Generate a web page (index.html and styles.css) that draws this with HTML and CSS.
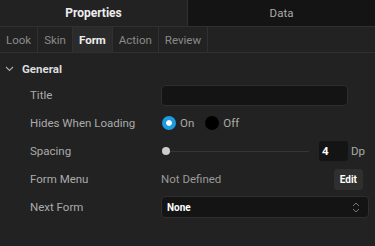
FILE: index.html
```html
<!DOCTYPE html>
<html lang="en">
<head>
  <meta charset="UTF-8">
  <meta name="viewport" content="width=device-width, initial-scale=1.0">
  <title>Properties</title>
  <link rel="stylesheet" href="styles.css">
</head>
<body>
  <div class="panel-tabs">
    <div class="panel-tab active">Properties</div>
    <div class="panel-tab">Data</div>
  </div>
  <div class="sub-tabs">
    <div class="sub-tab">Look</div>
    <div class="sub-tab">Skin</div>
    <div class="sub-tab active">Form</div>
    <div class="sub-tab">Action</div>
    <div class="sub-tab">Review</div>
  </div>
  <div class="section">
    <div class="section-title">
      <svg class="chevron" width="9" height="6" viewBox="0 0 9 6"><path d="M1 1l3.5 3.5L8 1" fill="none" stroke="#aaa" stroke-width="1.1"/></svg>
      General
    </div>
    <div class="row">
      <span class="label">Title</span>
      <div class="field"><input type="text" class="text-input"></div>
    </div>
    <div class="row">
      <span class="label">Hides When Loading</span>
      <div class="field radios">
        <span class="radio on"></span><span class="radio-text">On</span>
        <span class="radio"></span><span class="radio-text">Off</span>
      </div>
    </div>
    <div class="row">
      <span class="label">Spacing</span>
      <div class="field slider-field">
        <div class="slider"><span class="thumb"></span></div>
        <div class="num-input">4</div>
        <span class="unit">Dp</span>
      </div>
    </div>
    <div class="row">
      <span class="label">Form Menu</span>
      <div class="field menu-field">
        <span class="muted">Not Defined</span>
        <button class="edit-btn">Edit</button>
      </div>
    </div>
    <div class="row">
      <span class="label">Next Form</span>
      <div class="field">
        <div class="select">None
          <svg width="8" height="11" viewBox="0 0 8 11"><path d="M1 4l3-3 3 3M1 7l3 3 3-3" fill="none" stroke="#777" stroke-width="1"/></svg>
        </div>
      </div>
    </div>
  </div>
</body>
</html>
```
FILE: styles.css
```css
* {
  box-sizing: border-box;
}
body, html {
  margin: 0;
  height: 100%;
}
body {
  background: #222;
  font-family: Roboto, "Liberation Sans", sans-serif;
  font-size: 11.5px;
  color: #bbb;
  overflow: hidden;
}
.panel-tabs {
  display: flex;
  height: 27px;
  border-bottom: 1px solid #303030;
}
.panel-tab {
  flex: 1;
  display: flex;
  align-items: center;
  justify-content: center;
  background: #141414;
  color: #aaa;
  font-size: 11.5px;
  border-left: 1px solid #303030;
}
.panel-tab.active {
  background: #222;
  color: #eee;
  font-weight: bold;
  font-size: 12px;
  border-left: none;
}
.sub-tabs {
  display: flex;
  height: 26px;
  border-bottom: 1px solid #303030;
}
.sub-tab {
  display: flex;
  align-items: center;
  padding: 0 6px;
  color: #8a8a8a;
  border-right: 1px solid #303030;
}
.sub-tab.active {
  background: #2b2b2b;
  color: #eee;
  font-weight: bold;
}
.section-title {
  display: flex;
  align-items: center;
  height: 28px;
  padding: 3px 0 0 5px;
  color: #ddd;
  font-weight: bold;
}
.chevron {
  margin-right: 8px;
}
.row {
  display: flex;
  align-items: center;
  height: 28px;
}
.label {
  width: 161px;
  padding-left: 30px;
  color: #aaa;
}
.field {
  display: flex;
  align-items: center;
}
.text-input {
  width: 187px;
  height: 21px;
  background: #141414;
  border: 1px solid #2e2e2e;
  border-radius: 4px;
  outline: none;
}
.radio {
  width: 14px;
  height: 14px;
  border-radius: 50%;
  background: #000;
  margin-left: 1px;
}
.radio.on {
  background: #1d9be0;
  border: 4px solid #1d9be0;
  box-shadow: inset 0 0 0 4px #fff;
}
.radio-text {
  margin: 0 10px 0 4px;
  color: #aaa;
}
.slider-field {
  width: 214px;
}
.slider {
  position: relative;
  width: 147px;
  height: 1px;
  background: #363636;
  margin-left: 1px;
}
.thumb {
  position: absolute;
  left: 0;
  top: -4px;
  width: 8px;
  height: 8px;
  border-radius: 50%;
  background: #ccc;
}
.num-input {
  margin-left: 10px;
  width: 29px;
  height: 20px;
  line-height: 20px;
  padding-left: 3px;
  background: #141414;
  border-radius: 3px;
  color: #fff;
  font-weight: bold;
}
.unit {
  margin-left: 3px;
  color: #aaa;
}
.menu-field {
  width: 202px;
  justify-content: space-between;
}
.muted {
  color: #999;
}
.edit-btn {
  height: 21px;
  padding: 0 6px;
  border: none;
  border-radius: 3px;
  background: #2f2f2f;
  color: #fff;
  font-family: inherit;
  font-size: 10px;
  font-weight: bold;
}
.select {
  display: flex;
  align-items: center;
  justify-content: space-between;
  width: 208px;
  height: 22px;
  padding: 0 8px 0 5px;
  background: #141414;
  border: 1px solid #2e2e2e;
  border-radius: 4px;
  color: #fff;
  font-size: 10px;
  font-weight: bold;
}
```
